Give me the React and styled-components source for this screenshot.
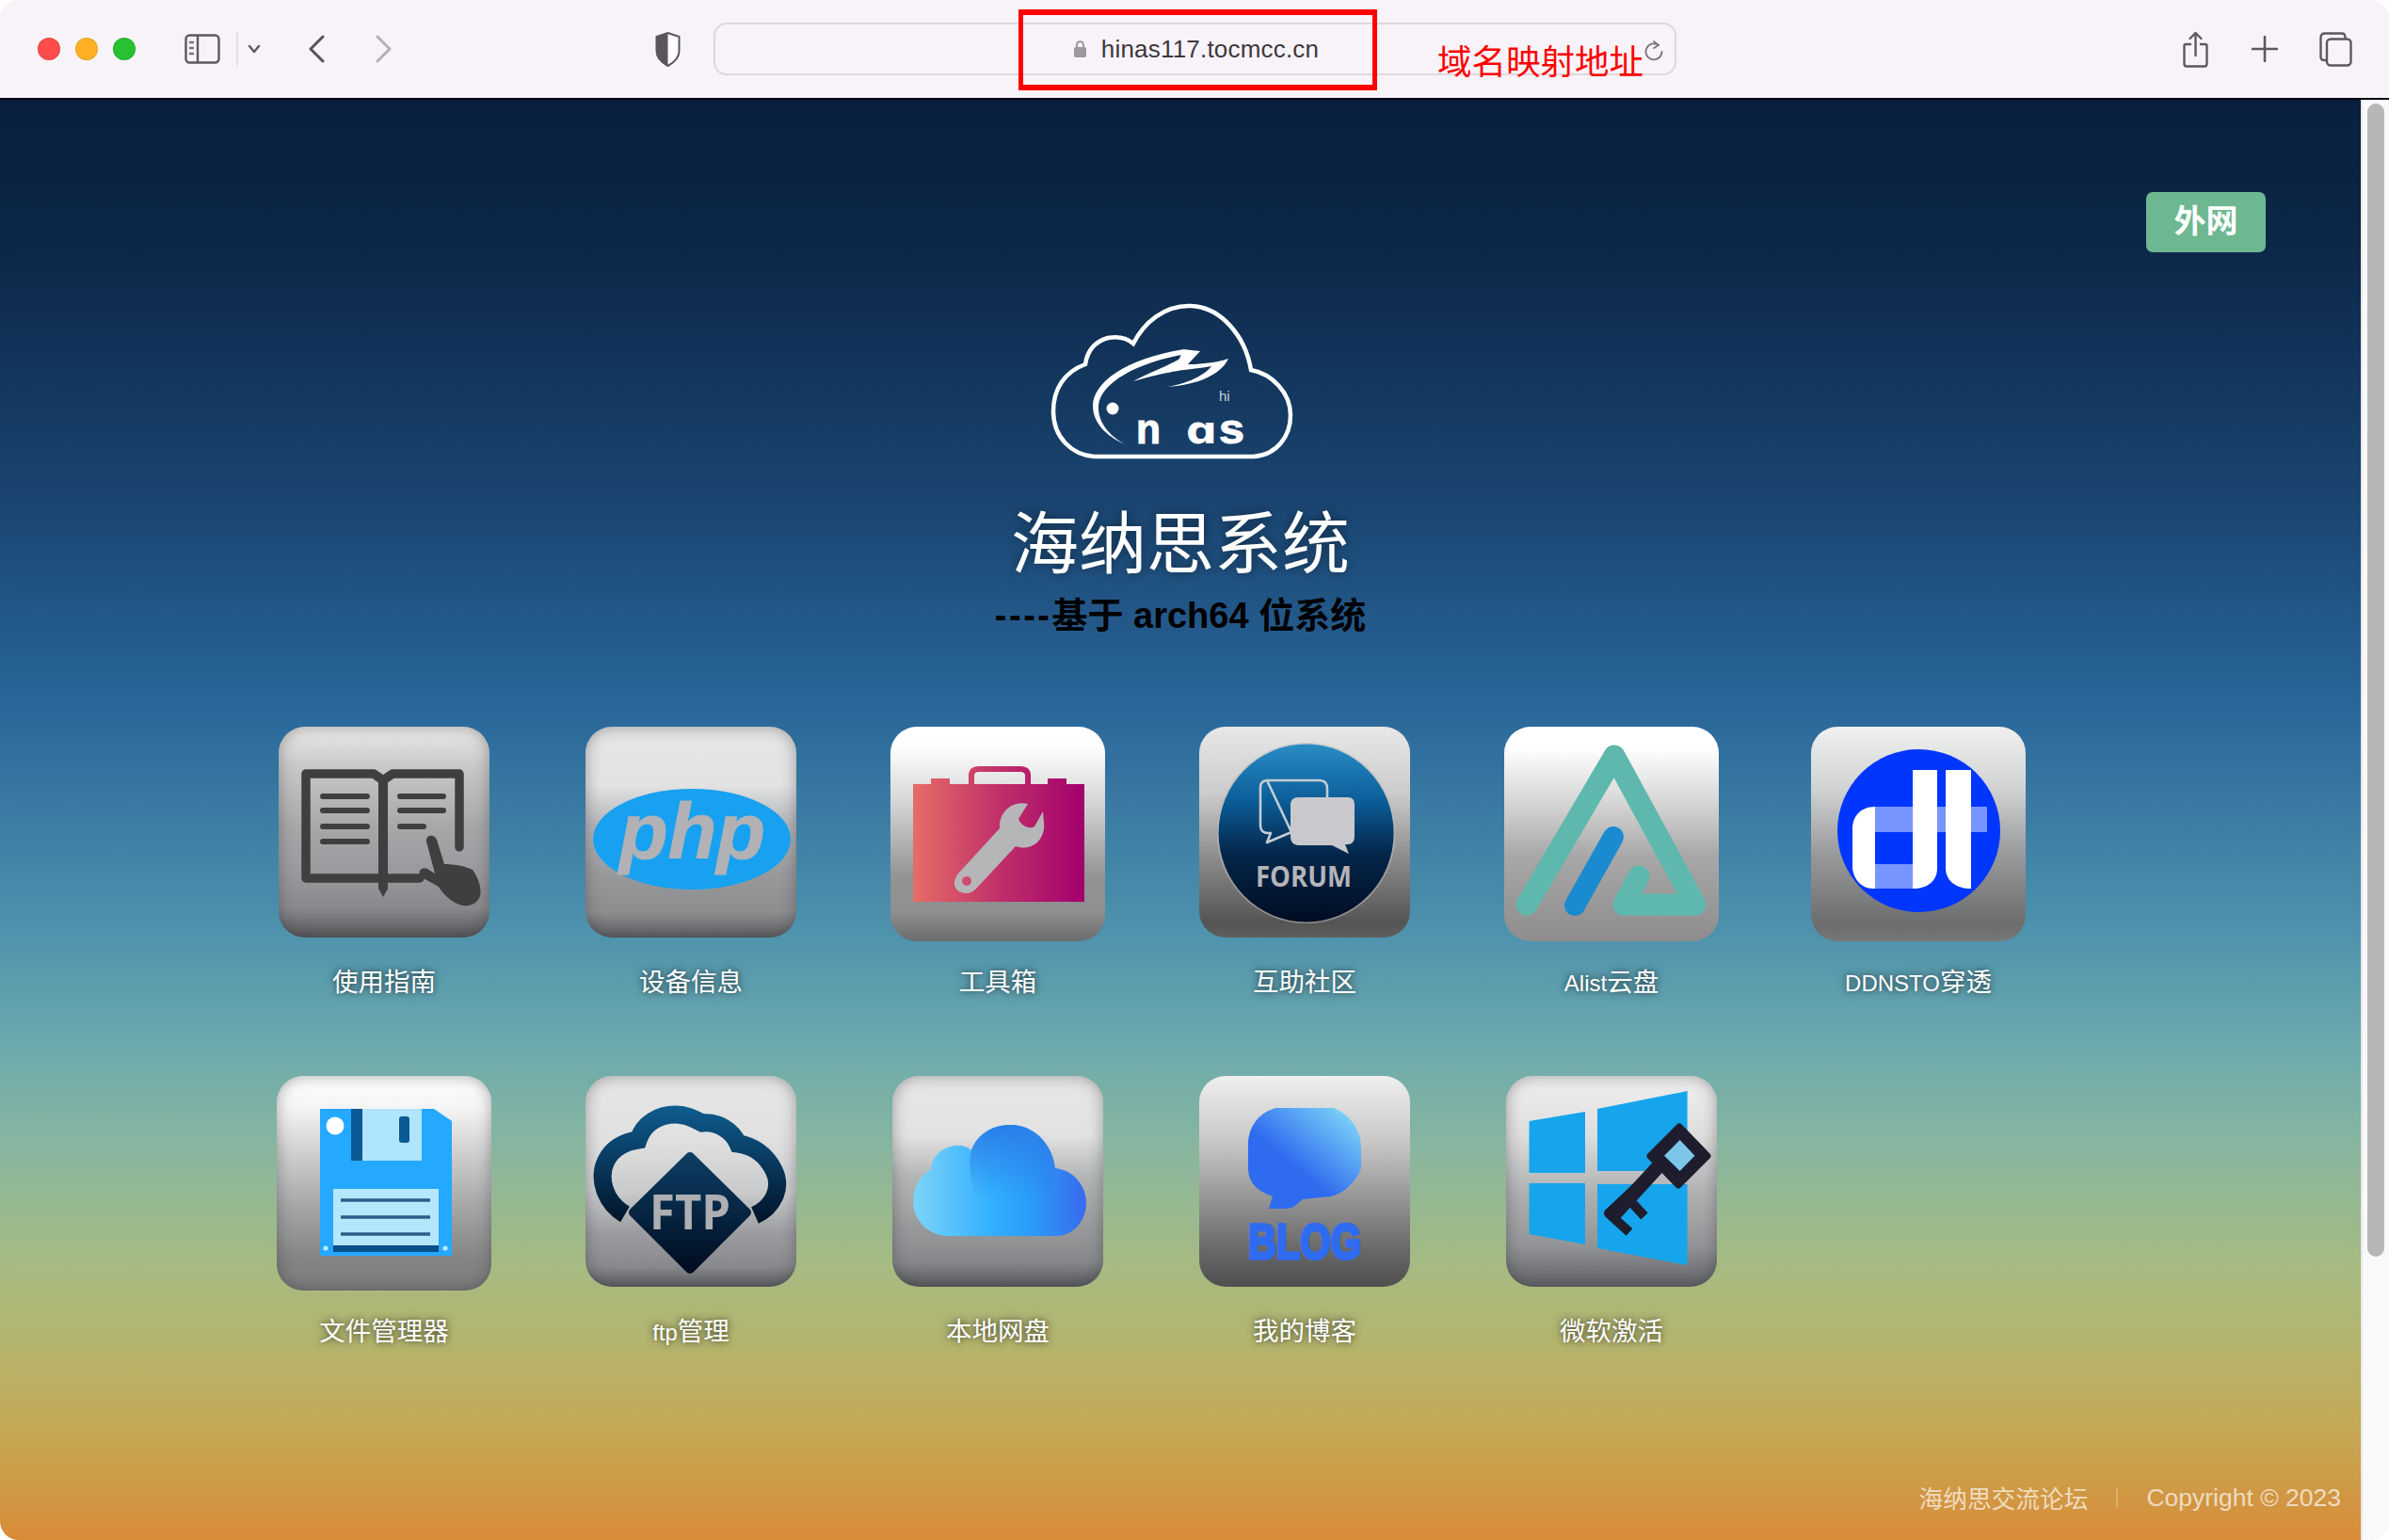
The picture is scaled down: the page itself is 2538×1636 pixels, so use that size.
import React from "react";
import styled, { createGlobalStyle } from "styled-components";

const Global = createGlobalStyle`
  html, body { margin: 0; padding: 0; background: #fff; }
  body { font-family: "Liberation Sans", "Noto Sans CJK SC", sans-serif; }
`;

const Window = styled.div`
  width: 2538px; height: 1636px; border-radius: 20px; overflow: hidden;
  display: flex; flex-direction: column; background: #f8f3f8;
`;
const TitleBar = styled.header`
  position: relative; flex: none; height: 104px; border-bottom: 2px solid #020812;
  background: #f8f3f8; display: flex; align-items: center; padding-left: 40px;
`;
const Lights = styled.div`display: flex; gap: 16px; flex: none;`;
const Light = styled.span`
  width: 24px; height: 24px; border-radius: 50%; background: ${p => p.$c};
  box-shadow: inset 0 0 0 1px rgba(0,0,0,.1);
`;
const Slot = styled.div`
  flex: none; display: block; margin-left: ${p => p.$ml}px; width: ${p => p.$w}px; height: ${p => p.$h}px;
  & > svg { display: block; width: 100%; height: 100%; }
`;
const Divider = styled.span`flex: none; width: 2px; height: 36px; background: #e4dfe4; margin-left: ${p => p.$ml}px;`;
const UrlBar = styled.div`
  position: relative; flex: none; box-sizing: border-box; width: 1023px; height: 56px; margin-left: 35px;
  border: 2px solid #dcd8dc; border-radius: 14px; display: flex; align-items: center; justify-content: center; gap: 15px; padding-left: 2px;
`;
const UrlText = styled.span`font-size: 26px; color: #3c383c; letter-spacing: .2px;`;
const Reload = styled.div`
  position: absolute; right: 11px; top: 17px; width: 22px; height: 22px;
  & > svg { display: block; width: 100%; height: 100%; }
`;
const RedBox = styled.div`
  position: absolute; left: 1082px; top: 10px; width: 381px; height: 86px; box-sizing: border-box;
  border: 5px solid #ff0000; border-top-width: 6px; border-bottom-width: 6px;
`;
const RedText = styled.div`
  position: absolute; left: 1527px; top: 42px; font-size: 36.5px; line-height: 44px; color: #ff0000;
  font-family: "Noto Sans CJK SC", sans-serif; white-space: nowrap;
`;
const Body = styled.div`flex: 1; display: flex; min-height: 0;`;
const Page = styled.main`
  flex: 1; display: flex; flex-direction: column; min-width: 0;
  background: linear-gradient(180deg, #0a1f3e 0%, #0c2748 10%, #1a4571 28%, #29669a 42%, #4f93ad 58%, #6aa8ae 65%, #85b5a1 72%, #a6bb82 81%, #b9b267 88%, #c6a652 93%, #d98c38 100%);
`;
const BadgeRow = styled.div`display: flex; justify-content: flex-end; padding: 98px 101px 0 0;`;
const Badge = styled.div`
  width: 127px; height: 64px; box-sizing: border-box; padding-bottom: 8px; border-radius: 7px; background: #6db891; color: #fff;
  display: flex; align-items: center; justify-content: center; font-size: 34px; font-weight: 700;
  font-family: "Noto Sans CJK SC", sans-serif;
`;
const Hero = styled.section`display: flex; flex-direction: column; align-items: center; padding-top: 55px;`;
const Logo = styled.div`
  width: 256px; height: 165px; margin-right: 18px;
  & > svg { display: block; width: 100%; height: 100%; overflow: visible; }
`;
const Title = styled.h1`
  margin: 39px 0 0; font-size: 72px; line-height: 90px; font-weight: 400; color: #fff;
  font-family: "Noto Sans CJK SC", sans-serif; text-shadow: 0 0 12px rgba(0,0,0,.45);
`;
const Subtitle = styled.h2`
  margin: 17px 0 0; font-size: 38px; line-height: 40px; font-weight: 700; color: #000;
  font-family: "Liberation Sans", "Noto Sans CJK SC", sans-serif;
`;
const Dashes = styled.span`letter-spacing: 2.5px;`;
const Grid = styled.nav`
  margin-top: 98px; padding-left: 245px; display: grid; grid-template-columns: repeat(6, 326px); row-gap: 78px;
`;
const Item = styled.a`display: flex; flex-direction: column; align-items: center;`;
const IconSlot = styled.div`height: 228px; width: 100%; display: flex; justify-content: center;`;
const Tile = styled.div`
  width: ${p => p.$size}px; height: ${p => p.$size}px; border-radius: 28px; overflow: hidden;
  background: ${p => p.$bg}; box-shadow: ${p => p.$soft ? "inset 0 0 16px rgba(40,40,45,.4)" : "none"};
  & > svg { display: block; width: 100%; height: 100%; }
`;
const Label = styled.div`
  margin-top: 21px; font-size: 27.5px; line-height: 40px; color: #fff; white-space: nowrap;
  font-family: "Noto Sans CJK SC", sans-serif; font-weight: 400;
  text-shadow: 0 0 10px rgba(0,0,0,.55), 0 0 4px rgba(0,0,0,.25);
`;
const Latin = styled.span`font-family: "Liberation Sans", sans-serif; font-size: 24px;`;
const Footer = styled.footer`
  margin-top: auto; display: flex; justify-content: flex-end; align-items: center; padding: 0 21px 25px 0;
  font-size: 26.5px; line-height: 40px; color: rgba(255,255,255,.68);
`;
const FooterCn = styled.span`font-family: "Noto Sans CJK SC", sans-serif; font-weight: 400; font-size: 25.7px;`;
const FooterSep = styled.span`width: 2px; height: 20px; margin: 0 30px; background: rgba(255,255,255,.22);`;
const Track = styled.aside`
  flex: none; width: 30px; box-sizing: border-box; background: #f9f9f9; border-left: 2px solid #e8e8e8; padding: 4px 5px 0;
`;
const Thumb = styled.div`width: 18px; height: 1225px; border-radius: 9px; background: #b7b7b7;`;

const T = { font: "Liberation Sans, sans-serif" };

const Guide = () => (
  <svg viewBox="0 0 224 224">
    <path d="M192 128V50H121L111 57 101 50H29V161H150" fill="none" stroke="#3f3f3f" strokeWidth="9.5" strokeLinejoin="round" strokeLinecap="round" />
    <path d="M106 52H116V172L111 181 106 172Z" fill="#3f3f3f" />
    <g stroke="#3f3f3f" strokeWidth="6" strokeLinecap="round">
      <path d="M47 74H94M47 89H94M47 106H94M47 122H94M129 74H175M129 89H175M129 106H154" />
    </g>
    <path d="M157 122C156 114 166 114 168 120L176 146C186 146 198 148 206 152 212 160 216 172 214 180 211 188 204 191 196 190 186 188 176 180 170 170L152 160C146 155 152 148 158 151L166 156Z" fill="#3f3f3f" />
  </svg>
);
const Php = () => (
  <svg viewBox="0 0 224 224">
    <ellipse cx="113" cy="119.5" rx="105" ry="53.5" fill="#18a1f0" />
    <text x="36" y="140" fontFamily={T.font} fontSize="84" fontWeight="700" fontStyle="italic" fill="#b2b2b6" stroke="#b2b2b6" strokeWidth="1" textLength="155" lengthAdjust="spacingAndGlyphs">php</text>
  </svg>
);
const Toolbox = () => (
  <svg viewBox="0 0 228 228">
    <defs>
      <linearGradient id="tb" x1="24" x2="206" y1="0" y2="0" gradientUnits="userSpaceOnUse">
        <stop offset="0" stopColor="#e66d66" /><stop offset=".5" stopColor="#c0306a" /><stop offset="1" stopColor="#a3006e" />
      </linearGradient>
    </defs>
    <path d="M86 61V52C86 47 89 45 94 45H138C143 45 146 47 146 52V61" fill="none" stroke="url(#tb)" strokeWidth="6" />
    <rect x="43" y="55" width="20" height="7" fill="url(#tb)" />
    <rect x="167" y="55" width="20" height="7" fill="url(#tb)" />
    <rect x="24" y="61" width="182" height="125" fill="url(#tb)" />
    <path d="M146 82C130 78 115 90 116 108L72 156C64 166 68 176 80 177 84 177 88 175 91 172L133 127C150 133 165 120 163 102L162 90 153 106C147 110 138 104 136 98Z" fill="#b6b6b8" />
    <circle cx="81" cy="164" r="5" fill="#cf4c70" />
  </svg>
);
const Forum = () => (
  <svg viewBox="0 0 224 224">
    <defs>
      <linearGradient id="fo" x1="0" x2="0" y1="0" y2="1">
        <stop offset="0" stopColor="#2a8cc6" /><stop offset=".32" stopColor="#0b5d98" /><stop offset=".62" stopColor="#04264a" /><stop offset="1" stopColor="#000c22" />
      </linearGradient>
    </defs>
    <ellipse cx="113.6" cy="113" rx="95" ry="96" fill="#b9b9b9" opacity=".55" />
    <ellipse cx="113.6" cy="113" rx="93" ry="94.5" fill="url(#fo)" />
    <path d="M72 57H128C133 57 136 60 136 66V76M98 112L72 123 76 113H73C68 113 65 110 65 105V64C65 60 68 57 72 57Z" fill="none" stroke="#c4ccd4" strokeWidth="2.6" strokeLinejoin="round" />
    <path d="M105 75H158C163 75 165 78 165 83V117C165 122 162 125 158 125H155L159 135 141 126H106C100 126 97 122 97 117V83C97 78 100 75 105 75Z" fill="#c9c9cd" />
    <text x="60" y="170" fontFamily="Open Sans, sans-serif" fontSize="30" fontWeight="700" fill="#b4b5b9" textLength="102" lengthAdjust="spacingAndGlyphs">FORUM</text>
  </svg>
);
const Alist = () => (
  <svg viewBox="0 0 228 228">
    <path d="M24 189L117 31 203 189H127L143 159" fill="none" stroke="#5eb8ad" strokeWidth="23" strokeLinecap="round" strokeLinejoin="round" />
    <path d="M116 117L75 190" stroke="#1a8bd0" strokeWidth="22" strokeLinecap="round" />
  </svg>
);
const Ddnsto = () => (
  <svg viewBox="0 0 228 228">
    <circle cx="114.5" cy="110.5" r="86.5" fill="#0036ff" />
    <path d="M68 85H187V112H68ZM68 146H108V172H68Z" fill="#fff" opacity=".47" />
    <path d="M68 85V172H66C52 172 44 160 44 148V108C44 96 52 85 68 85Z" fill="#fff" />
    <path d="M108 46H134V150C134 164 124 172 108 172Z" fill="#fff" />
    <path d="M143 46H170V172C154 172 143 164 143 150Z" fill="#fff" />
  </svg>
);
const Floppy = () => (
  <svg viewBox="0 0 228 228">
    <path d="M46 35H167L186 48V191H46Z" fill="#25a8ff" />
    <circle cx="62" cy="53" r="9.5" fill="#fff" />
    <rect x="79" y="35" width="75" height="55" fill="#b0e5ff" />
    <rect x="79" y="35" width="12" height="55" fill="#0a5a95" />
    <rect x="130" y="43" width="11" height="28" rx="3" fill="#0a5a95" />
    <rect x="60" y="120" width="112" height="60" fill="#b5e7fc" />
    <rect x="60" y="180" width="112" height="7" fill="#0a4f8a" />
    <path d="M68 132H163M68 150H163M68 168H163" stroke="#2a5f8a" strokeWidth="3.5" />
    <circle cx="52" cy="183" r="2.6" fill="#b8ecff" /><circle cx="179" cy="183" r="2.6" fill="#b8ecff" />
  </svg>
);
const Ftp = () => (
  <svg viewBox="0 0 224 224">
    <defs>
      <linearGradient id="ft1" x1="0" x2="0" y1="30" y2="155" gradientUnits="userSpaceOnUse">
        <stop offset="0" stopColor="#0f5d90" /><stop offset="1" stopColor="#01142a" />
      </linearGradient>
      <linearGradient id="ft2" x1="0" x2="0" y1="80" y2="210" gradientUnits="userSpaceOnUse">
        <stop offset="0" stopColor="#0d3f66" /><stop offset="1" stopColor="#000b1e" />
      </linearGradient>
    </defs>
    <path d="M42 147C20 134 13 108 22 90 29 76 42 70 56 68 62 50 78 41 96 41 108 41 116 46 124 50 140 48 156 58 162 72 178 74 192 84 200 100 210 120 198 140 180 148" fill="none" stroke="url(#ft1)" strokeWidth="19" />
    <path d="M111 86L171 145 111 205 51 145Z" fill="url(#ft2)" stroke="url(#ft2)" strokeWidth="10" strokeLinejoin="round" />
    <text x="111" y="163" textAnchor="middle" fontFamily="Open Sans, sans-serif" fontSize="52" fontWeight="700" fill="#aeafb3" textLength="86" lengthAdjust="spacingAndGlyphs">FTP</text>
  </svg>
);
const ICloud = () => (
  <svg viewBox="0 0 224 224">
    <defs>
      <linearGradient id="ic" x1="22" x2="206" y1="0" y2="0" gradientUnits="userSpaceOnUse">
        <stop offset="0" stopColor="#7cd4f8" /><stop offset=".45" stopColor="#33b0ff" /><stop offset=".68" stopColor="#2a9cf8" /><stop offset="1" stopColor="#3a69ee" />
      </linearGradient>
      <linearGradient id="ic2" x1="0" x2="0" y1="52" y2="130" gradientUnits="userSpaceOnUse">
        <stop offset="0" stopColor="#2a7fe8" /><stop offset="1" stopColor="#2a7fe8" stopOpacity="0" />
      </linearGradient>
    </defs>
    <path d="M59 170C38 170 22 153 22 133 22 117 31 104 41 100 42 84 55 74 70 74 76 74 81 76 84 79 90 62 106 52 126 52 150 52 170 72 173 98 192 100 206 116 206 135 206 154 192 170 174 170Z" fill="url(#ic)" />
    <path d="M84 79C90 62 106 52 126 52 150 52 170 72 173 98 173 112 170 122 164 130H90C84 115 80 95 84 79Z" fill="url(#ic2)" />
  </svg>
);
const Blog = () => (
  <svg viewBox="0 0 224 224">
    <defs>
      <linearGradient id="bl" x1="160" x2="105" y1="35" y2="100" gradientUnits="userSpaceOnUse">
        <stop offset="0" stopColor="#7fd8f8" /><stop offset="1" stopColor="#2f6bef" />
      </linearGradient>
    </defs>
    <path d="M82 34H142C160 40 172 58 172 76V98C168 110 156 124 140 128L110 131C104 136 100 141 92 141H74L78 128C60 122 52 112 52 98V70C54 50 66 38 82 34Z" fill="url(#bl)" />
    <text x="52" y="194" fontFamily={T.font} fontSize="52" fontWeight="700" fill="#2f6bef" stroke="#2f6bef" strokeWidth="3.5" textLength="120" lengthAdjust="spacingAndGlyphs">BLOG</text>
  </svg>
);
const Win = () => (
  <svg viewBox="0 0 224 224">
    <g fill="#16a5ec">
      <path d="M24.5 48L84 38V103H24.5Z" /><path d="M97 35L192.6 16V101H97Z" />
      <path d="M24.5 114H84V179L24.5 168Z" /><path d="M97 115H192.6V201L97 183Z" />
    </g>
    <path d="M184 54L214 85 183 116 153 85Z" fill="#1e1d2e" stroke="#1e1d2e" strokeWidth="7" strokeLinejoin="round" />
    <path d="M184.6 68L200.5 84.7 184.6 101 168 84.7Z" fill="#7cc6ea" />
    <path d="M162 96L109 146 131 166M135 136L147 149" fill="none" stroke="#1e1d2e" strokeWidth="10" strokeLinejoin="round" />
    <path d="M162 96L116 146" fill="none" stroke="#1e1d2e" strokeWidth="15" />
  </svg>
);

const NasLogo = () => (
  <svg viewBox="0 0 256 165">
    <path d="M45 162H215C240 160 254 140 254 118 254 94 234 74 212 70 206 34 180 3 148 2 120 1 98 20 87 42 80 36 70 34 60 36 46 40 38 50 36 64 14 72 2 90 2 114 2 142 22 160 45 162Z" fill="none" stroke="#fff" strokeWidth="4.5" />
    <path d="M78 149C58 140 44 126 44 108 44 84 78 58 141 48L144 53C90 62 52 84 50 108 49 126 62 140 78 149Z" fill="#fff" />
    <path d="M140 48L158 50 145 64C160 64 176 62 188 58 182 72 160 86 122 88 148 84 164 74 170 66 150 70 136 68 87 82 110 70 128 64 136 58Z" fill="#fff" />
    <circle cx="65" cy="111" r="6.5" fill="#fff" />
    <text x="178" y="103" fontFamily={T.font} fontSize="15" fill="#c8d0da">hi</text>
    <text x="90" y="148" fontFamily={T.font} fontSize="44" fontWeight="700" fill="#fff" stroke="#fff" strokeWidth="1" textLength="26" lengthAdjust="spacingAndGlyphs">n</text>
    <text x="143" y="148" fontFamily="DejaVu Sans, sans-serif" fontSize="40" fontWeight="700" fill="#fff" textLength="33" lengthAdjust="spacingAndGlyphs">ɑ</text>
    <text x="178" y="148" fontFamily={T.font} fontSize="44" fontWeight="700" fill="#fff" stroke="#fff" strokeWidth="1" textLength="27" lengthAdjust="spacingAndGlyphs">s</text>
  </svg>
);

const stroke = { fill: "none", strokeLinecap: "round", strokeLinejoin: "round" };

const items = [
  { size: 224, soft: true, Art: Guide, label: "使用指南", bg: "linear-gradient(180deg,#ececec 0%,#c9c9c9 18%,#a6a7a9 48%,#98999c 70%,#88898c 86%,#58585b 100%)" },
  { size: 224, soft: true, Art: Php, label: "设备信息", bg: "linear-gradient(180deg,#e6e6e6 0%,#e1e2e2 28%,#b5b6b8 46%,#98999b 70%,#8c8d8f 88%,#5f6063 100%)" },
  { size: 228, Art: Toolbox, label: "工具箱", bg: "linear-gradient(180deg,#fff 0%,#fdfdfd 10%,#d6d6d6 35%,#919395 70%,#8e8f91 86%,#6b6c6e 100%)" },
  { size: 224, Art: Forum, label: "互助社区", bg: "linear-gradient(180deg,#e8e8e8 0%,#cbcbcb 32%,#8c8c8c 62%,#545454 93%,#5f5f5f 100%)" },
  { size: 228, Art: Alist, label: <><Latin>Alist</Latin>云盘</>, bg: "linear-gradient(180deg,#fff 0%,#fff 10%,#d6d6d6 35%,#a8a8a8 60%,#8e8c8c 100%)" },
  { size: 228, Art: Ddnsto, label: <><Latin>DDNSTO</Latin>穿透</>, bg: "linear-gradient(180deg,#f0f0f0 0%,#d2d4d4 28%,#97999b 60%,#6c6d6f 92%,#777 100%)" },
  { size: 228, soft: true, Art: Floppy, label: "文件管理器", bg: "linear-gradient(180deg,#fff 0%,#f4f4f4 15%,#c8c8c8 40%,#a3a5a5 62%,#848484 85%,#7c7c7c 100%)" },
  { size: 224, soft: true, Art: Ftp, label: <><Latin>ftp</Latin>管理</>, bg: "linear-gradient(180deg,#e6e6e6 0%,#e0e0e0 30%,#c9cacc 55%,#9a9b9e 75%,#898a8d 90%,#5f6063 100%)" },
  { size: 224, soft: true, Art: ICloud, label: "本地网盘", bg: "linear-gradient(180deg,#e6e6e6 0%,#e2e2e2 28%,#b4b5b6 48%,#98999b 72%,#87888b 88%,#5b5c5f 100%)" },
  { size: 224, Art: Blog, label: "我的博客", bg: "linear-gradient(180deg,#efefef 0%,#c6c6c6 32%,#8e8e8e 62%,#666 84%,#4f4f4f 100%)" },
  { size: 224, soft: true, Art: Win, label: "微软激活", bg: "linear-gradient(180deg,#efefef 0%,#dedede 28%,#b0b1b2 55%,#939497 80%,#626367 100%)" },
];

export default function App() {
  return (
    <Window>
      <Global />
      <TitleBar>
        <Lights>
          <Light $c="#fe4c4a" /><Light $c="#ffb025" /><Light $c="#28c132" />
        </Lights>
        <Slot $ml={52} $w={38} $h={32}>
          <svg viewBox="0 0 38 32"><rect x="1.5" y="1.5" width="35" height="29" rx="4" fill="none" stroke="#5d585d" strokeWidth="2.4" />
            <path d="M14 2V30" stroke="#5d585d" strokeWidth="2.4" />
            <path d="M5 9H10M5 15H10M5 21H10" stroke="#77727a" strokeWidth="2.4" /></svg>
        </Slot>
        <Divider $ml={17} />
        <Slot $ml={10} $w={14} $h={10}>
          <svg viewBox="0 0 14 10"><path d="M2 2L7 8 12 2" {...stroke} stroke="#5d585d" strokeWidth="2.4" /></svg>
        </Slot>
        <Slot $ml={50} $w={18} $h={30}>
          <svg viewBox="0 0 18 30"><path d="M16 2L3 15 16 28" {...stroke} stroke="#56515a" strokeWidth="3" /></svg>
        </Slot>
        <Slot $ml={54} $w={18} $h={30}>
          <svg viewBox="0 0 18 30"><path d="M2 2L15 15 2 28" {...stroke} stroke="#b4b0b6" strokeWidth="3" /></svg>
        </Slot>
        <Slot $ml={279} $w={27} $h={37}>
          <svg viewBox="0 0 27 37"><path d="M13.5 1L25.5 5V20C25.5 28 19 33 13.5 36 8 33 1.5 28 1.5 20V5Z" fill="#fff" stroke="#5a555c" strokeWidth="2" />
            <path d="M13.5 1L1.5 5V20C1.5 28 8 33 13.5 36Z" fill="#5a555c" /></svg>
        </Slot>
        <UrlBar>
          <Slot $ml={0} $w={15} $h={20}>
            <svg viewBox="0 0 15 20"><path d="M4 9V6C4 1 11 1 11 6V9" fill="none" stroke="#9c989e" strokeWidth="2" /><rect x="1" y="8" width="13" height="11" rx="2" fill="#9c989e" /></svg>
          </Slot>
          <UrlText>hinas117.tocmcc.cn</UrlText>
          <Reload>
            <svg viewBox="0 0 22 22"><path d="M16 5A8.5 8.5 0 1 0 19.5 12" {...stroke} stroke="#78747a" strokeWidth="1.8" /><path d="M11 1L16 5 11 8" {...stroke} stroke="#78747a" strokeWidth="1.8" /></svg>
          </Reload>
        </UrlBar>
        <Slot $ml={538} $w={27} $h={39}>
          <svg viewBox="0 0 27 39"><path d="M8 14H3C2 14 1.5 15 1.5 16V35C1.5 36.5 2.5 37.5 4 37.5H23C24.5 37.5 25.5 36.5 25.5 35V16C25.5 15 25 14 24 14H19" {...stroke} stroke="#5d585d" strokeWidth="2.4" />
            <path d="M13.5 26V2M7.5 8L13.5 2 19.5 8" {...stroke} stroke="#5d585d" strokeWidth="2.4" /></svg>
        </Slot>
        <Slot $ml={46} $w={28} $h={28}>
          <svg viewBox="0 0 28 28"><path d="M14 1V27M1 14H27" {...stroke} stroke="#5d585d" strokeWidth="2.6" /></svg>
        </Slot>
        <Slot $ml={44} $w={35} $h={37}>
          <svg viewBox="0 0 35 37"><path d="M7 30H5C3 30 1.5 28.5 1.5 26V6C1.5 3 3 1.5 6 1.5H24C26 1.5 27.5 3 27.5 6V7" {...stroke} stroke="#5d585d" strokeWidth="2.4" />
            <rect x="8" y="7.5" width="25.5" height="28" rx="4" fill="none" stroke="#5d585d" strokeWidth="2.4" /></svg>
        </Slot>
        <RedBox />
        <RedText>域名映射地址</RedText>
      </TitleBar>
      <Body>
        <Page>
          <BadgeRow><Badge>外网</Badge></BadgeRow>
          <Hero>
            <Logo><NasLogo /></Logo>
            <Title>海纳思系统</Title>
            <Subtitle><Dashes>----</Dashes>基于 arch64 位系统</Subtitle>
          </Hero>
          <Grid>
            {items.map(({ size, soft, Art, label, bg }, i) => (
              <Item key={i}>
                <IconSlot>
                  <Tile $size={size} $soft={soft} $bg={bg}><Art /></Tile>
                </IconSlot>
                <Label>{label}</Label>
              </Item>
            ))}
          </Grid>
          <Footer>
            <FooterCn>海纳思交流论坛</FooterCn>
            <FooterSep />
            <span>Copyright © 2023</span>
          </Footer>
        </Page>
        <Track><Thumb /></Track>
      </Body>
    </Window>
  );
}
